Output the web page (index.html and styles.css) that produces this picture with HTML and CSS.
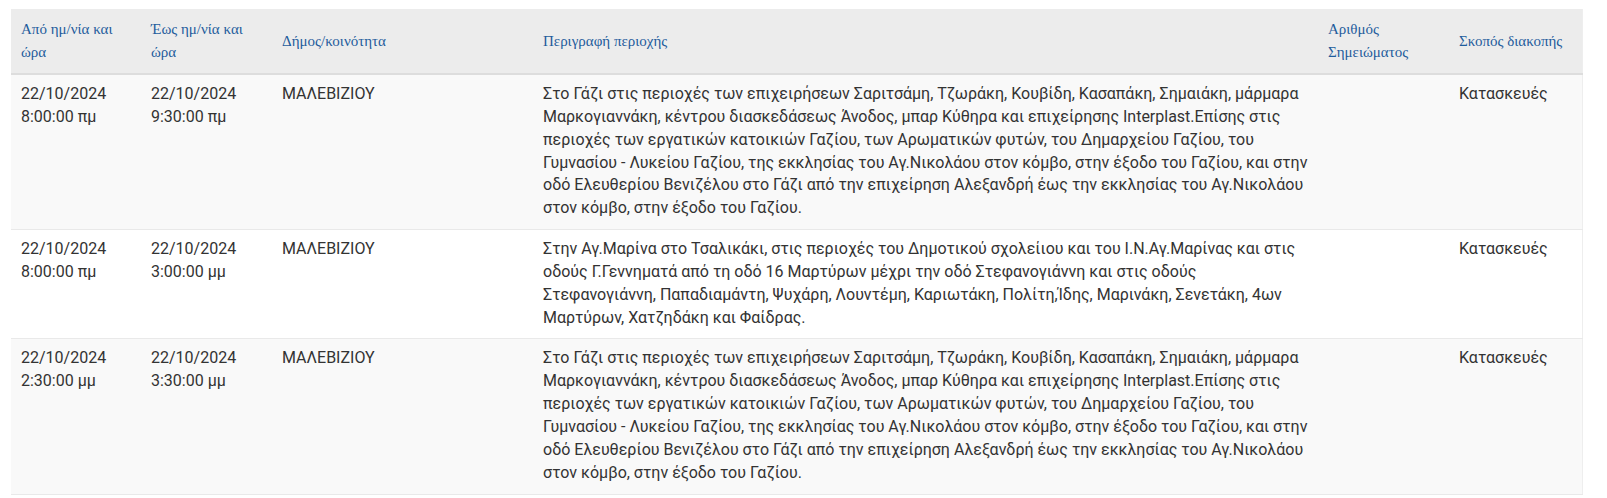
FILE: index.html
```html
<!DOCTYPE html>
<html lang="el">
<head>
<meta charset="utf-8">
<title>Διακοπές</title>
<link rel="stylesheet" href="styles.css">
</head>
<body>
<div class="wrap">
<table class="grid">
  <colgroup>
    <col class="c1"><col class="c2"><col class="c3"><col class="c4"><col class="c5"><col class="c6">
  </colgroup>
  <thead>
    <tr>
      <th>Από ημ/νία και ώρα</th>
      <th>Έως ημ/νία και ώρα</th>
      <th>Δήμος/κοινότητα</th>
      <th>Περιγραφή περιοχής</th>
      <th>Αριθμός Σημειώματος</th>
      <th>Σκοπός διακοπής</th>
    </tr>
  </thead>
  <tbody>
    <tr class="odd">
      <td>22/10/2024<br>8:00:00 πμ</td>
      <td>22/10/2024<br>9:30:00 πμ</td>
      <td>ΜΑΛΕΒΙΖΙΟΥ</td>
      <td>Στο Γάζι στις περιοχές των επιχειρήσεων Σαριτσάμη, Τζωράκη, Κουβίδη, Κασαπάκη, Σημαιάκη, μάρμαρα Μαρκογιαννάκη, κέντρου διασκεδάσεως Άνοδος, μπαρ Κύθηρα και επιχείρησης Interplast.Επίσης στις περιοχές των εργατικών κατοικιών Γαζίου, των Αρωματικών φυτών, του Δημαρχείου Γαζίου, του Γυμνασίου - Λυκείου Γαζίου, της εκκλησίας του Αγ.Νικολάου στον κόμβο, στην έξοδο του Γαζίου, και στην οδό Ελευθερίου Βενιζέλου στο Γάζι από την επιχείρηση Αλεξανδρή έως την εκκλησίας του Αγ.Νικολάου στον κόμβο, στην έξοδο του Γαζίου.</td>
      <td></td>
      <td>Κατασκευές</td>
    </tr>
    <tr class="even">
      <td>22/10/2024<br>8:00:00 πμ</td>
      <td>22/10/2024<br>3:00:00 μμ</td>
      <td>ΜΑΛΕΒΙΖΙΟΥ</td>
      <td>Στην Αγ.Μαρίνα στο Τσαλικάκι, στις περιοχές του Δημοτικού σχολείιου και του Ι.Ν.Αγ.Μαρίνας και στις οδούς Γ.Γεννηματά από τη οδό 16 Μαρτύρων μέχρι την οδό Στεφανογιάννη και στις οδούς Στεφανογιάννη, Παπαδιαμάντη, Ψυχάρη, Λουντέμη, Καριωτάκη, Πολίτη,Ίδης, Μαρινάκη, Σενετάκη, 4ων Μαρτύρων, Χατζηδάκη και Φαίδρας.</td>
      <td></td>
      <td>Κατασκευές</td>
    </tr>
    <tr class="odd">
      <td>22/10/2024<br>2:30:00 μμ</td>
      <td>22/10/2024<br>3:30:00 μμ</td>
      <td>ΜΑΛΕΒΙΖΙΟΥ</td>
      <td>Στο Γάζι στις περιοχές των επιχειρήσεων Σαριτσάμη, Τζωράκη, Κουβίδη, Κασαπάκη, Σημαιάκη, μάρμαρα Μαρκογιαννάκη, κέντρου διασκεδάσεως Άνοδος, μπαρ Κύθηρα και επιχείρησης Interplast.Επίσης στις περιοχές των εργατικών κατοικιών Γαζίου, των Αρωματικών φυτών, του Δημαρχείου Γαζίου, του Γυμνασίου - Λυκείου Γαζίου, της εκκλησίας του Αγ.Νικολάου στον κόμβο, στην έξοδο του Γαζίου, και στην οδό Ελευθερίου Βενιζέλου στο Γάζι από την επιχείρηση Αλεξανδρή έως την εκκλησίας του Αγ.Νικολάου στον κόμβο, στην έξοδο του Γαζίου.</td>
      <td></td>
      <td>Κατασκευές</td>
    </tr>
  </tbody>
</table>
</div>
</body>
</html>
```

FILE: styles.css
```css
html, body {
  margin: 0;
  padding: 0;
  background: #ffffff;
}

.wrap {
  padding: 9px 25px 0 11px;
}

.grid {
  width: 1571px;
  table-layout: fixed;
  border-collapse: collapse;
  font-family: Roboto, "Noto Sans", sans-serif;
  font-size: 16px;
  line-height: 1.42857;
  color: #333333;
  border-right: 1px solid #eeeeee;
}

.c1 { width: 130px; }
.c2 { width: 131px; }
.c3 { width: 261px; }
.c4 { width: 785px; }
.c5 { width: 131px; }
.c6 { width: 133px; }

.grid th {
  background: #ececec;
  font-family: "Liberation Serif", "DejaVu Serif", serif;
  font-weight: normal;
  font-size: 15px;
  line-height: 23px;
  color: #1f5c9c;
  text-align: left;
  vertical-align: middle;
  padding: 9px 10px 9px 10px;
  border-bottom: 2px solid #dddddd;
}

.grid td {
  vertical-align: top;
  padding: 8px 10px 9px 10px;
  border-top: 1px solid #e9e9e9;
}

.grid thead + tbody tr:first-child td {
  border-top: 0;
}

.grid tr.odd td {
  background: #f9f9f9;
}

.grid tr.even td {
  background: #ffffff;
}

.grid tbody tr:last-child td {
  border-bottom: 1px solid #e9e9e9;
}
```
